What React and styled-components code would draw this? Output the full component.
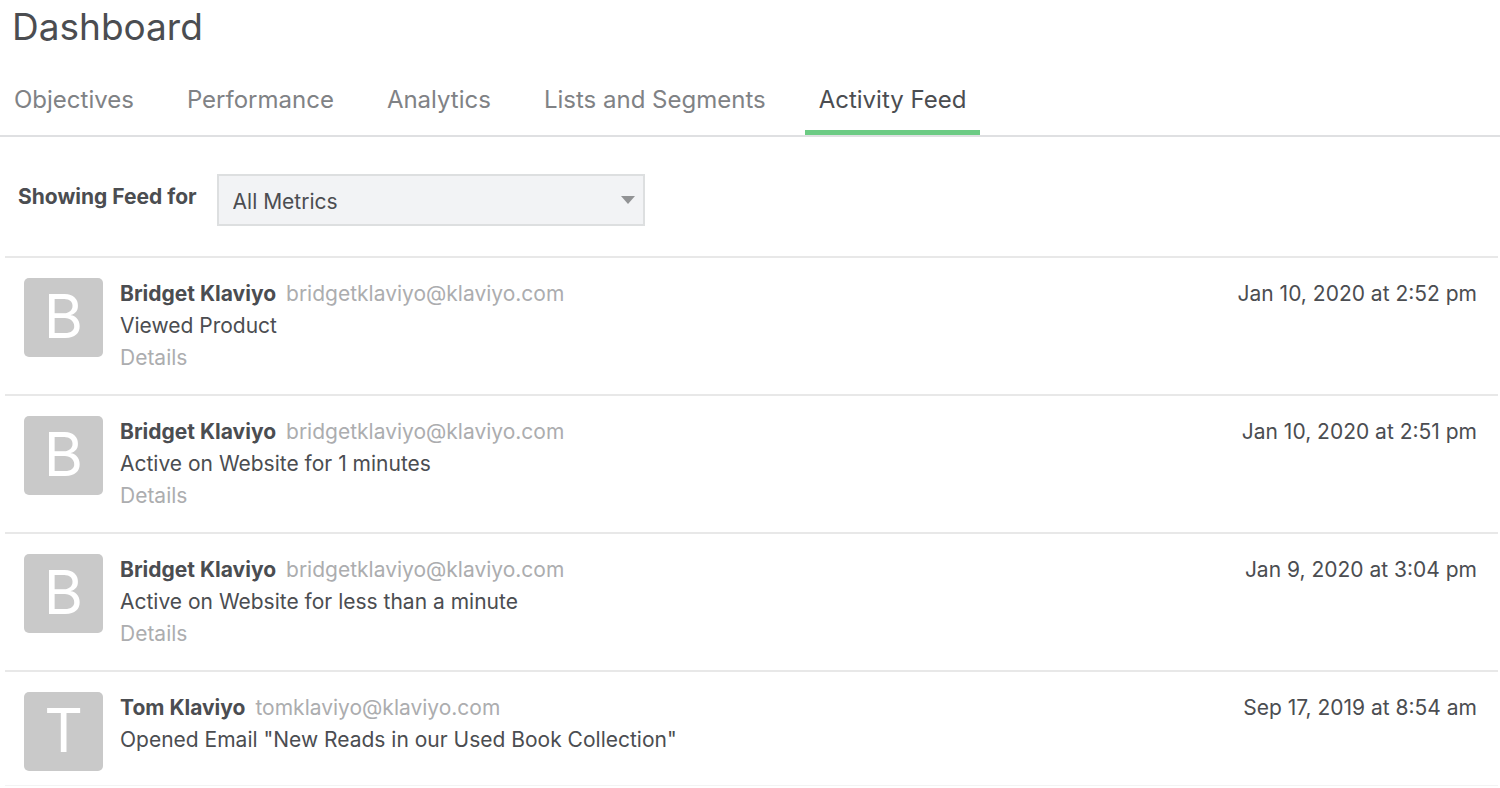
import React from "react";
import styled, { createGlobalStyle } from "styled-components";

const tabs = ["Objectives", "Performance", "Analytics", "Lists and Segments", "Activity Feed"];

const events = [
  { name: "Bridget Klaviyo", email: "bridgetklaviyo@klaviyo.com", action: "Viewed Product", details: true, date: "Jan 10, 2020 at 2:52 pm" },
  { name: "Bridget Klaviyo", email: "bridgetklaviyo@klaviyo.com", action: "Active on Website for 1 minutes", details: true, date: "Jan 10, 2020 at 2:51 pm" },
  { name: "Bridget Klaviyo", email: "bridgetklaviyo@klaviyo.com", action: "Active on Website for less than a minute", details: true, date: "Jan 9, 2020 at 3:04 pm" },
  { name: "Tom Klaviyo", email: "tomklaviyo@klaviyo.com", action: 'Opened Email "New Reads in our Used Book Collection"', details: false, date: "Sep 17, 2019 at 8:54 am" },
];

export default function App() {
  return (
    <>
      <GlobalStyle />
      <Title>Dashboard</Title>
      <Tabs>
        {tabs.map((tab) => (
          <Tab key={tab} href="/" $active={tab === "Activity Feed"}>
            {tab}
          </Tab>
        ))}
      </Tabs>
      <Filter>
        <FilterLabel htmlFor="metric">Showing Feed for</FilterLabel>
        <SelectBox>
          <Select id="metric">
            <option>All Metrics</option>
          </Select>
          <Caret viewBox="0 0 14 8" aria-hidden="true">
            <path d="M0 0h14L7 8z" />
          </Caret>
        </SelectBox>
      </Filter>
      <Feed>
        {events.map((event) => (
          <Item key={event.date}>
            <Avatar>{event.name[0]}</Avatar>
            <Info>
              <div>
                <Name>{event.name}</Name>
                <Email>{event.email}</Email>
              </div>
              <div>{event.action}</div>
              {event.details && <Details href="/">Details</Details>}
            </Info>
            <Time>{event.date}</Time>
          </Item>
        ))}
      </Feed>
    </>
  );
}

const GlobalStyle = createGlobalStyle`
  * {
    box-sizing: border-box;
  }
  body {
    margin: 0;
    background-color: #fff;
    color: #4b4d51;
    font-family: Inter, "Liberation Sans", sans-serif;
    font-size: 21px;
    line-height: 32px;
  }
`;

const Title = styled.h1`
  margin: 0;
  padding: 4px 12px 0;
  font-size: 37px;
  font-weight: 400;
  line-height: 46px;
`;

const Tabs = styled.nav`
  display: flex;
  gap: 25px;
  padding-top: 20px;
  border-bottom: 2px solid #dfe0e2;
`;

const Tab = styled.a`
  height: 65px;
  padding: 13px 14px 0;
  border-bottom: 5px solid ${(props) => (props.$active ? "#6ccb84" : "transparent")};
  color: ${(props) => (props.$active ? "#4b4d51" : "#808285")};
  font-size: 24px;
  line-height: 34px;
  text-decoration: none;
  white-space: nowrap;
`;

const Filter = styled.div`
  display: flex;
  gap: 20px;
  padding: 37px 18px 30px;
`;

const FilterLabel = styled.label`
  padding-top: 7px;
  font-weight: 700;
`;

const SelectBox = styled.div`
  position: relative;
  width: 428px;
`;

const Select = styled.select`
  width: 100%;
  height: 52px;
  padding: 3px 44px 0 14px;
  border: 2px solid #dddfe0;
  border-radius: 0;
  background-color: #f2f3f5;
  color: #4b4d51;
  font: inherit;
  appearance: none;
`;

const Caret = styled.svg`
  position: absolute;
  top: 22px;
  right: 10px;
  width: 14px;
  height: 8px;
  fill: #929395;
  pointer-events: none;
`;

const Feed = styled.ul`
  margin: 0;
  padding: 0 2px 0 5px;
  list-style: none;
`;

const Item = styled.li`
  display: flex;
  gap: 17px;
  padding: 20px 21px 20px 19px;
  border-top: 2px solid #e8e8e8;

  &:last-child {
    padding-bottom: 14px;
    border-bottom: 1px solid #f3f3f3;
  }
`;

const Avatar = styled.div`
  width: 79px;
  height: 79px;
  border-radius: 5px;
  background-color: #c9c9c9;
  color: #fff;
  font-size: 60px;
  line-height: 77px;
  text-align: center;
`;

const Info = styled.div`
  flex: 1;
`;

const Name = styled.span`
  margin-right: 10px;
  font-weight: 700;
`;

const Email = styled.span`
  color: #acadaf;
`;

const Details = styled.a`
  color: #acadaf;
  text-decoration: none;
`;

const Time = styled.time`
  white-space: nowrap;
`;
